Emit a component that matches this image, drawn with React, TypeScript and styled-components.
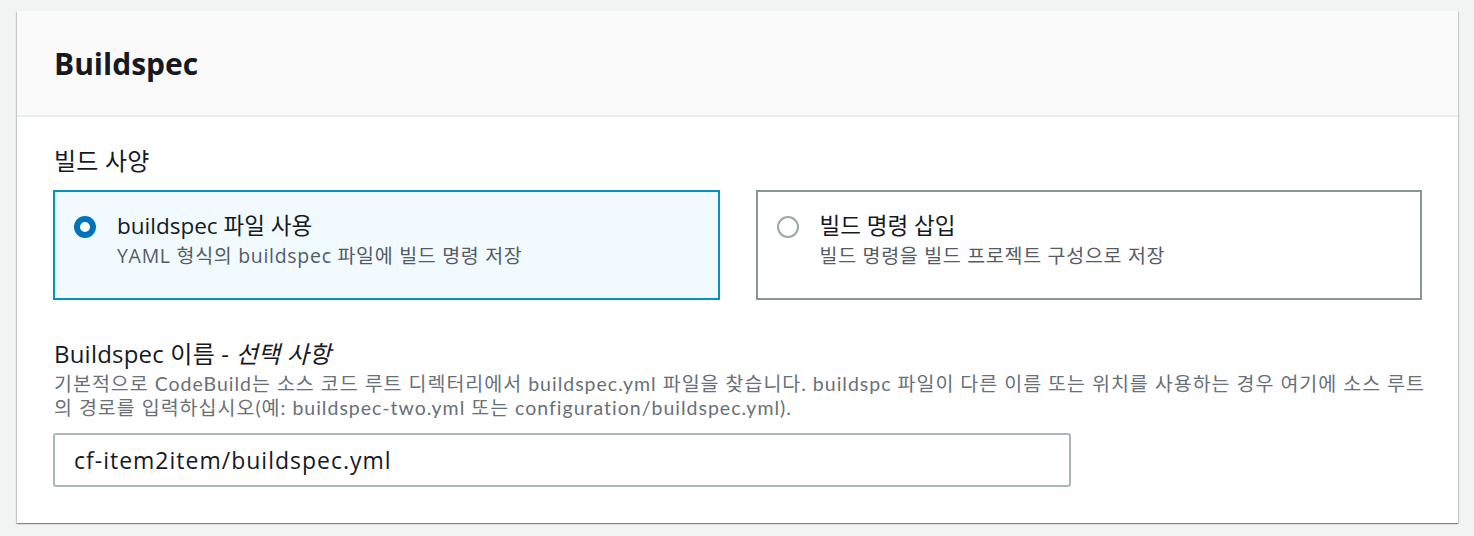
import React from "react";
import styled, { createGlobalStyle } from "styled-components";

const FONT = `"Open Sans", "Noto Sans CJK KR", sans-serif`;
const DESC_FONT = `Lato, "Noto Sans CJK KR", sans-serif`;

const Global = createGlobalStyle`
  html, body { margin: 0; padding: 0; background: #f2f3f3; }
  body { font-family: ${FONT}; color: #16191f; }
  * { box-sizing: border-box; }
`;

const Page = styled.div`
  padding: 11px 16px 13px 17px;
`;

const Card = styled.section`
  background: #fff;
  box-shadow: 0 1px 1px 0 rgba(0, 28, 36, 0.3), 1px 1px 1px 0 rgba(0, 28, 36, 0.15),
    -1px 1px 1px 0 rgba(0, 28, 36, 0.15);
`;

const Header = styled.header`
  height: 106px;
  display: flex;
  align-items: center;
  padding: 0 37px;
  background: #fafafa;
  border-bottom: 2px solid #eaeded;
`;

const Title = styled.h2`
  margin: 0;
  font-size: 30px;
  font-weight: 700;
`;

const Body = styled.div`
  padding: 29px 36px 36px 36px;
  display: flex;
  flex-direction: column;
`;

const Label = styled.div`
  font-size: 24px;
  line-height: 30px;
  letter-spacing: 0.2px;
  padding-left: 1px;
`;

const Tiles = styled.div`
  margin-top: 14px;
  display: grid;
  grid-template-columns: 1fr 1fr;
  gap: 36px;
`;

const Tile = styled.div<{ $selected?: boolean }>`
  border: 2px solid ${(p) => (p.$selected ? "#0095c1" : "#879596")};
  background: ${(p) => (p.$selected ? "#f1faff" : "#fff")};
  padding: 19px 17px 27px 19px;
  display: flex;
  gap: 21px;
  align-items: flex-start;
`;

const Radio = styled.span<{ $checked?: boolean }>`
  flex: none;
  width: 22px;
  height: 22px;
  margin-top: 5px;
  border-radius: 50%;
  ${(p) =>
    p.$checked
      ? `border: 6.5px solid #0073bb; background: #fff;`
      : `border: 2px solid #9aa8a8; background: #fff;`}
`;

const TileText = styled.div`
  display: flex;
  flex-direction: column;
`;

const TileTitle = styled.div`
  font-size: 22.5px;
  line-height: 30px;
`;

const TileSub = styled.div`
  font-size: 19.5px;
  line-height: 30px;
  letter-spacing: 0.7px;
  color: #545b64;
`;

const Field = styled.div`
  margin-top: 39px;
  display: flex;
  flex-direction: column;
`;

const Optional = styled.i`
  font-style: italic;
`;

const Desc = styled.div`
  margin-top: 3px;
  font-family: ${DESC_FONT};
  font-size: 19.5px;
  line-height: 24px;
  letter-spacing: 1px;
  color: #687078;
  padding-left: 1px;
  white-space: nowrap;
`;

const Line = styled.span`
  display: block;
`;

const Input = styled.input`
  margin-top: 13px;
  width: 1018px;
  height: 54px;
  border: 2px solid #aab7b8;
  border-radius: 3px;
  padding: 0 19px;
  font-family: ${FONT};
  font-size: 23px;
  letter-spacing: 1px;
  color: #16191f;
  background: #fff;
  outline: none;
`;

export default function App() {
  return (
    <>
      <Global />
      <Page>
        <Card>
          <Header>
            <Title>Buildspec</Title>
          </Header>
          <Body>
            <Label>빌드 사양</Label>
            <Tiles>
              <Tile $selected>
                <Radio $checked />
                <TileText>
                  <TileTitle>buildspec 파일 사용</TileTitle>
                  <TileSub>YAML 형식의 buildspec 파일에 빌드 명령 저장</TileSub>
                </TileText>
              </Tile>
              <Tile>
                <Radio />
                <TileText>
                  <TileTitle>빌드 명령 삽입</TileTitle>
                  <TileSub>빌드 명령을 빌드 프로젝트 구성으로 저장</TileSub>
                </TileText>
              </Tile>
            </Tiles>
            <Field>
              <Label>
                Buildspec 이름 - <Optional>선택 사항</Optional>
              </Label>
              <Desc>
                <Line>
                  기본적으로 CodeBuild는 소스 코드 루트 디렉터리에서 buildspec.yml 파일을 찾습니다. buildspc 파일이 다른 이름 또는 위치를 사용하는 경우 여기에 소스 루트
                </Line>
                <Line>의 경로를 입력하십시오(예: buildspec-two.yml 또는 configuration/buildspec.yml).</Line>
              </Desc>
              <Input defaultValue="cf-item2item/buildspec.yml" />
            </Field>
          </Body>
        </Card>
      </Page>
    </>
  );
}
